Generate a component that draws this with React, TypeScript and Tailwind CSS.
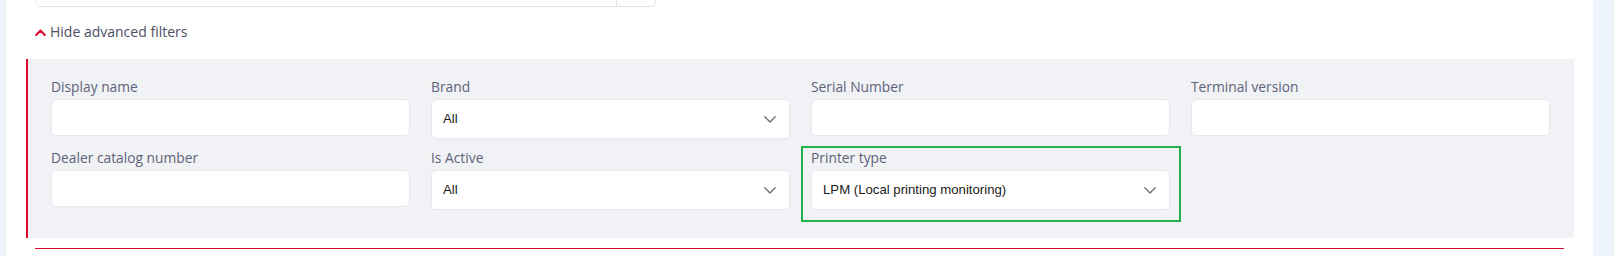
import React from "react";

const labelFont = { fontFamily: '"Open Sans", "Noto Sans", sans-serif' };

function Chevron() {
  return (
    <svg width="12" height="7" viewBox="0 0 12 7" fill="none" className="shrink-0">
      <path d="M0.8 0.8 L6 6 L11.2 0.8" stroke="#6b6b6b" strokeWidth="1.3" strokeLinecap="round" strokeLinejoin="round" />
    </svg>
  );
}

function Field({ label, select, value, highlight }: { label: string; select?: boolean; value?: string; highlight?: boolean }) {
  return (
    <div className="relative flex flex-col">
      {highlight && (
        <div className="absolute -left-[10px] -top-[2px] -right-[11px] -bottom-[12px] border-2 border-[#22b14c] pointer-events-none" />
      )}
      <div className="text-[13.8px] leading-[20px] text-[#5e6278]" style={labelFont}>
        {label}
      </div>
      {select ? (
        <div className="mt-[2px] h-[40px] rounded-[5px] border border-[#e6e8ee] bg-white flex items-center justify-between pl-[11px] pr-[13px]">
          <span className="text-[13.2px] text-[#1a1a1a] font-['Liberation_Sans',Arial,sans-serif]">{value}</span>
          <Chevron />
        </div>
      ) : (
        <div className="mt-[2px] h-[37px] rounded-[5px] border border-[#e6e8ee] bg-white" />
      )}
    </div>
  );
}

export default function App() {
  return (
    <div className="w-[1614px] h-[256px] flex bg-white overflow-hidden">
      <div className="w-[6px] shrink-0 bg-[#eef4fb]" />
      <div className="flex-1 flex flex-col bg-white">
        {/* top (cut) search input */}
        <div className="h-[7px] overflow-hidden flex items-end ml-[29px]">
          <div className="w-[621px] h-[40px] shrink-0 flex rounded-b-[6px] border border-[#e2e4ea] bg-white">
            <div className="flex-1" />
            <div className="w-[39px] border-l border-[#e2e4ea]" />
          </div>
        </div>
        {/* toggle */}
        <div className="mt-[15px] ml-[29px] flex items-center h-[20px]">
          <svg width="11" height="7" viewBox="0 0 11 7" fill="none" className="mr-[4px]">
            <path d="M1.2 6 L5.5 1.5 L9.8 6" stroke="#dc0a2d" strokeWidth="2" strokeLinecap="round" strokeLinejoin="round" />
          </svg>
          <span className="text-[14px] leading-[20px] text-[#4b4f63]" style={labelFont}>
            Hide advanced filters
          </span>
        </div>
        {/* panel */}
        <div className="mt-[17px] ml-[20px] mr-[19px] border-l-2 border-[#dc0a2d] bg-[#f1f2f6] pt-[18px] pl-[23px] pr-[24px] pb-[28px]">
          <div className="grid grid-cols-4 gap-x-[21px] gap-y-[9px] items-start">
            <Field label="Display name" />
            <Field label="Brand" select value="All" />
            <Field label="Serial Number" />
            <Field label="Terminal version" />
            <Field label="Dealer catalog number" />
            <Field label="Is Active" select value="All" />
            <Field label="Printer type" select value="LPM (Local printing monitoring)" highlight />
            <div />
          </div>
        </div>
        <div className="mt-[10px] ml-[29px] mr-[29px] h-px bg-[#dc0a2d]" />
      </div>
      <div className="w-[21px] shrink-0 bg-[#eef4fb]" />
    </div>
  );
}
